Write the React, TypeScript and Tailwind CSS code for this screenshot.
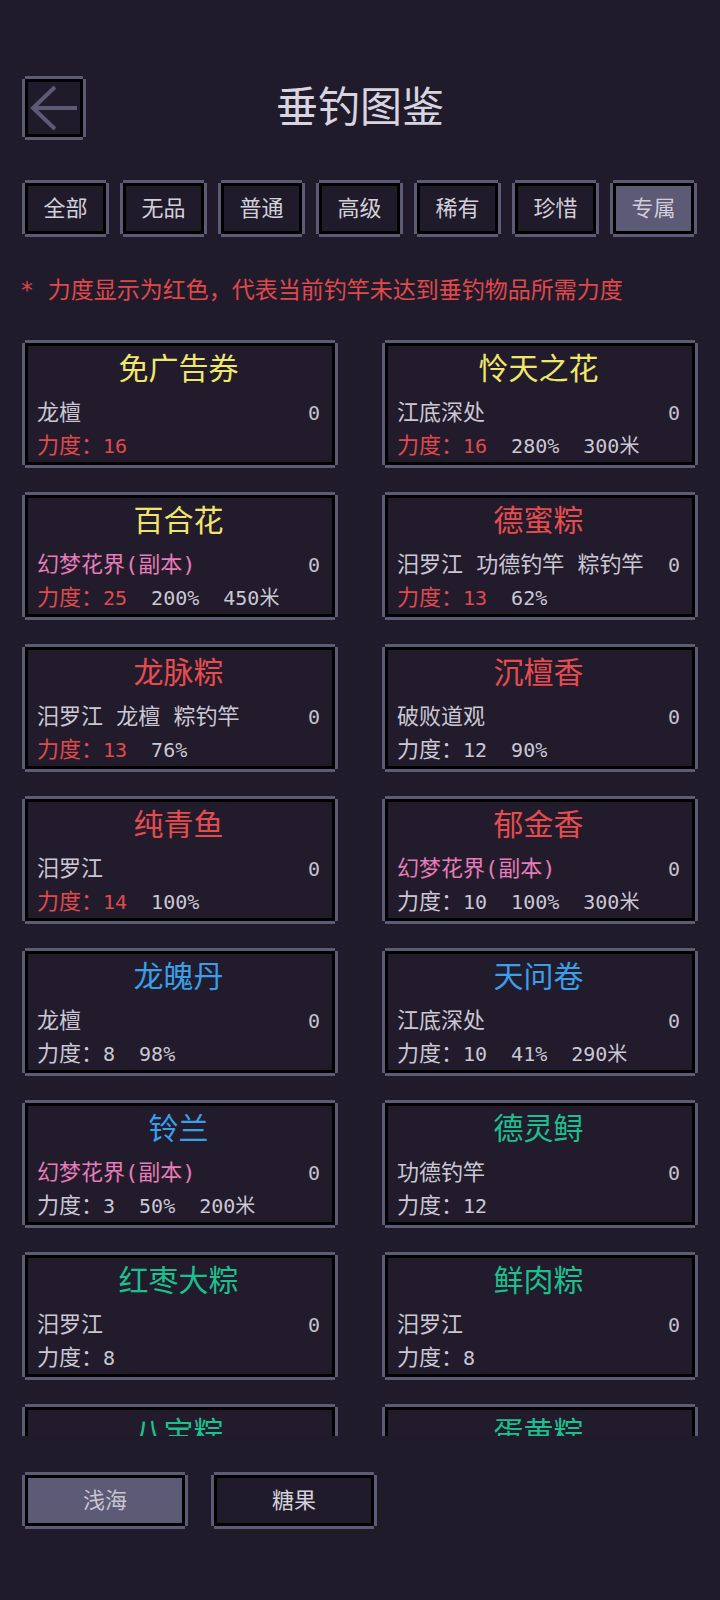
import React, { useState } from "react";

// pixel frame: grey outer edge with open corners, black inner line
const frame =
  "border-[3px] border-black shadow-[0_-3px_0_0_#5c5a74,0_3px_0_0_#5c5a74,-3px_0_0_0_#5c5a74,3px_0_0_0_#5c5a74]";

const FONT = "font-['DejaVu_Sans_Mono','Noto_Sans_CJK_SC',monospace]";

const YELLOW = "text-[#f0e66a]";
const RED = "text-[#e64c4e]";
const BLUE = "text-[#3a9ee8]";
const GREEN = "text-[#1cc08e]";

const TABS = ["全部", "无品", "普通", "高级", "稀有", "珍惜", "专属"];

type Item = {
  name: string;
  color: string;
  place: string;
  pink?: boolean;
  power: number;
  weak?: boolean;
  extra: string[];
};

const ITEMS: Item[] = [
  { name: "免广告券", color: YELLOW, place: "龙檀", power: 16, weak: true, extra: [] },
  { name: "怜天之花", color: YELLOW, place: "江底深处", power: 16, weak: true, extra: ["280%", "300米"] },
  { name: "百合花", color: YELLOW, place: "幻梦花界(副本)", pink: true, power: 25, weak: true, extra: ["200%", "450米"] },
  { name: "德蜜粽", color: RED, place: "汨罗江 功德钓竿 粽钓竿", power: 13, weak: true, extra: ["62%"] },
  { name: "龙脉粽", color: RED, place: "汨罗江 龙檀 粽钓竿", power: 13, weak: true, extra: ["76%"] },
  { name: "沉檀香", color: RED, place: "破败道观", power: 12, extra: ["90%"] },
  { name: "纯青鱼", color: RED, place: "汨罗江", power: 14, weak: true, extra: ["100%"] },
  { name: "郁金香", color: RED, place: "幻梦花界(副本)", pink: true, power: 10, extra: ["100%", "300米"] },
  { name: "龙魄丹", color: BLUE, place: "龙檀", power: 8, extra: ["98%"] },
  { name: "天问卷", color: BLUE, place: "江底深处", power: 10, extra: ["41%", "290米"] },
  { name: "铃兰", color: BLUE, place: "幻梦花界(副本)", pink: true, power: 3, extra: ["50%", "200米"] },
  { name: "德灵鲟", color: GREEN, place: "功德钓竿", power: 12, extra: [] },
  { name: "红枣大粽", color: GREEN, place: "汨罗江", power: 8, extra: [] },
  { name: "鲜肉粽", color: GREEN, place: "汨罗江", power: 8, extra: [] },
  { name: "八宝粽", color: GREEN, place: "汨罗江", power: 8, extra: [] },
  { name: "蛋黄粽", color: GREEN, place: "汨罗江", power: 8, extra: [] },
];

const ItemCard = ({ item }: { item: Item }) => (
  <div className={`${frame} h-[122px] bg-[#211b2c] pt-[3px] pl-[9px] pr-[12px]`}>
    <div className={`text-center text-[30px] leading-[40px] ${item.color}`}>
      {item.name}
    </div>
    <div className="mt-[8px] flex justify-between text-[22px] leading-[32px]">
      <span className={item.pink ? "text-[#e77cb8]" : "text-[#cbc7d3]"}>
        {item.place}
      </span>
      <span className="text-[20px] text-[#c4c0cc]">0</span>
    </div>
    <div className="flex items-baseline gap-[24px] text-[22px] leading-[34px] text-[#cbc7d3]">
      <span className={item.weak ? "text-[#e04a4c]" : ""}>
        力度：<span className="text-[20px]">{item.power}</span>
      </span>
      {item.extra.map((e) => (
        <span key={e} className="text-[20px]">
          {e}
        </span>
      ))}
    </div>
  </div>
);

const App = () => {
  const [tab, setTab] = useState(6);
  const [sea, setSea] = useState(0);

  return (
    <div className={`w-[720px] h-[1600px] bg-[#201b2a] ${FONT} flex flex-col`}>
      {/* Header */}
      <div className="flex items-center px-[25px] pt-[79px]">
        <button className={`${frame} w-[58px] h-[58px] bg-[#201b2a] flex items-center justify-center`}>
          <svg width="52" height="52" viewBox="0 0 52 52" fill="none">
            <path
              d="M27 5 L5 26 L27 47 M5 26 H49"
              stroke="#5c5a74"
              strokeWidth="4"
            />
          </svg>
        </button>
        <h1 className="flex-1 text-center text-[42px] leading-[58px] text-[#d8d4e0] font-normal">
          垂钓图鉴
        </h1>
        <div className="w-[58px]" />
      </div>

      {/* Tabs */}
      <div className="mt-[46px] flex gap-[17px] px-[25px]">
        {TABS.map((t, i) => (
          <button
            key={t}
            onClick={() => setTab(i)}
            className={`${frame} w-[81px] h-[51px] text-[22px] ${
              tab === i ? "bg-[#5c5a74] text-[#d0ccdc]" : "bg-[#201b2a] text-[#d4d0da]"
            }`}
          >
            {t}
          </button>
        ))}
      </div>

      {/* Note */}
      <p className="mt-[41px] px-[20px] text-[23px] leading-[30px] text-[#e0484c]">
        * 力度显示为红色，代表当前钓竿未达到垂钓物品所需力度
      </p>

      {/* Item list */}
      <div className="mt-[35px] h-[1096px] overflow-hidden pt-[3px] px-[25px]">
        <div className="grid grid-cols-2 gap-x-[50px] gap-y-[30px]">
          {ITEMS.map((item) => (
            <ItemCard key={item.name} item={item} />
          ))}
        </div>
      </div>

      {/* Sea switch */}
      <div className="mt-[39px] flex gap-[29px] px-[25px]">
        {["浅海", "糖果"].map((s, i) => (
          <button
            key={s}
            onClick={() => setSea(i)}
            className={`${frame} w-[160px] h-[51px] text-[22px] ${
              sea === i ? "bg-[#5c5a74] text-[#c8c4d2]" : "bg-[#201b2a] text-[#d4d0da]"
            }`}
          >
            {s}
          </button>
        ))}
      </div>
    </div>
  );
};

export default App;
